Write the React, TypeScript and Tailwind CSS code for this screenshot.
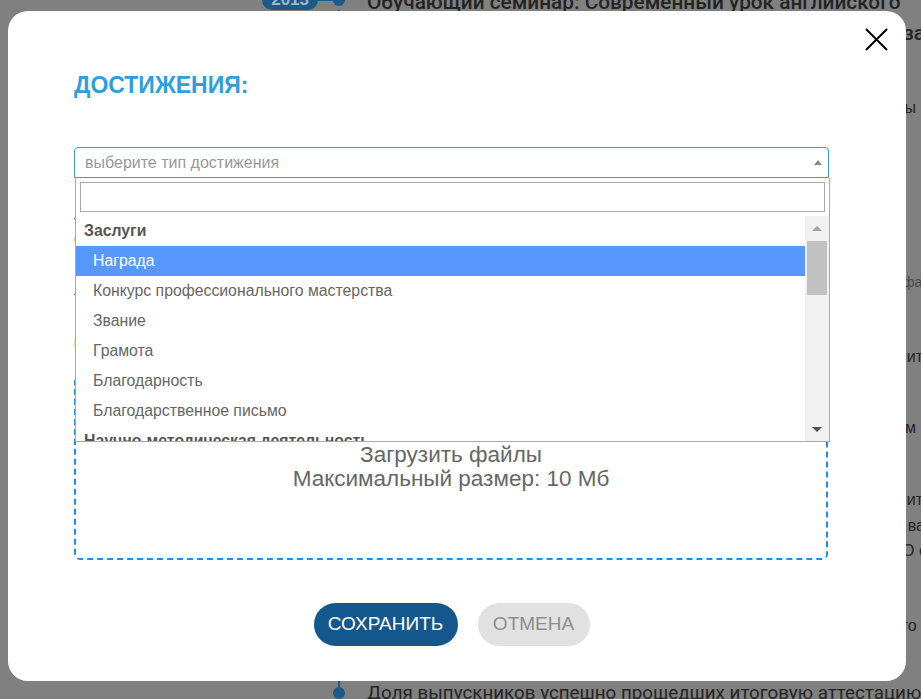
// App.tsx — achievements modal with an open select dropdown over a timeline page

const options = [
  'Награда',
  'Конкурс профессионального мастерства',
  'Звание',
  'Грамота',
  'Благодарность',
  'Благодарственное письмо',
];

function BackgroundPage() {
  return (
    <div className="flex h-[699px] w-[921px] overflow-hidden bg-[#808080] font-['Liberation_Sans',Arial,sans-serif] text-[#242424]">
      {/* timeline column */}
      <div className="flex w-[367px] shrink-0 flex-col items-end pr-[22px]">
        <div className="-mt-[10px] flex h-[20px] items-center">
          <span className="rounded-full bg-[#1c5a87] px-[9px] text-[17px] font-bold leading-[20px] text-[#9fb5c6]">2013</span>
          <span className="h-[2px] w-[15px] bg-[#1c5a87]" />
          <span className="size-[12px] rounded-full bg-[#1c5a87]" />
        </div>
        <div className="flex w-[12px] flex-1 flex-col items-center">
          <div className="w-[2px] flex-1 bg-[#1c5a87]" />
          <div className="size-[12px] shrink-0 rounded-full bg-[#1c5a87]" />
        </div>
      </div>

      {/* text column */}
      <div className="flex flex-col whitespace-nowrap">
        <div className="-mt-[10px] font-['Roboto',sans-serif] text-[20.8px] font-medium leading-[24px]">
          Обучающий семинар: Современный урок английского
        </div>
        <div className="mt-[7px] w-[558px] text-right font-['Roboto',sans-serif] text-[21px] font-medium leading-[24px]">
          языка в условиях ФГОС, организа
        </div>
        <div className="mt-[51px] w-[549px] text-right text-[16px] leading-[24px]">Результаты итоговой аттестации выпускникы</div>
        <div className="mt-[150px] w-[568px] text-right text-[14px] leading-[24px] text-[#4a4a4a]">Дата последней актуализации: факт</div>
        <div className="mt-[51px] w-[556px] text-right text-[16px] leading-[24px]">Доля обучающихся, прошедших ит</div>
        <div className="mt-[47px] w-[549px] text-right text-[16px] leading-[24px]">по образовательным программам</div>
        <div className="mt-[48px] w-[556px] text-right text-[16px] leading-[24px]">Выпускники, сдавшие экзамен ит</div>
        <div className="mt-[2px] w-[558px] text-right text-[16px] leading-[24px]">по предмету с результатом выше средне ва</div>
        <div className="mt-[1px] w-[560px] text-right text-[16px] leading-[24px]">по сравнению с данными по ОО с</div>
        <div className="mt-[51px] w-[560px] text-right text-[16px] leading-[24px]">в сравнении с прошлым учебным го г</div>
        <div className="mt-[43px] font-['Roboto',sans-serif] text-[18.8px] leading-[24px]">
          Доля выпускников успешно прошедших итоговую аттестацию (
        </div>
      </div>
    </div>
  );
}

function Scrollbar() {
  return (
    <div className="flex w-[24px] shrink-0 flex-col bg-[#f1f1f1]">
      <div className="flex h-[24px] items-center justify-center">
        <span className="h-0 w-0 border-x-[5px] border-b-[5px] border-x-transparent border-b-[#a3a3a3]" />
      </div>
      <div className="mx-[2px] mt-[1px] h-[54px] bg-[#c1c1c1]" />
      <div className="flex-1" />
      <div className="flex h-[24px] items-center justify-center">
        <span className="h-0 w-0 border-x-[5px] border-t-[5px] border-x-transparent border-t-[#505050]" />
      </div>
    </div>
  );
}

function Dropdown() {
  return (
    <div className="absolute left-[1px] top-full z-10 w-full border border-t-0 border-[#aaaaaa] bg-white">
      <div className="p-[4px]">
        <input className="block h-[30px] w-full border border-[#aaaaaa] px-[4px] outline-none" />
      </div>
      <div className="flex h-[225px]">
        <ul className="flex-1 overflow-hidden text-[15.8px] leading-[30px]">
          <li className="pl-[8px] font-bold text-[#555555]">Заслуги</li>
          {options.map((opt, i) => (
            <li
              key={opt}
              className={i === 0 ? 'bg-[#5897fb] pl-[17px] text-white' : 'pl-[17px] text-[#666666]'}
            >
              {opt}
            </li>
          ))}
          <li className="pl-[8px] font-bold text-[#555555]">Научно-методическая деятельность</li>
          <li className="pl-[17px] text-[#666666]">Публикация</li>
        </ul>
        <Scrollbar />
      </div>
    </div>
  );
}

function AchievementModal() {
  return (
    <div className="relative h-[670px] w-[898px] rounded-[20px] bg-white pl-[66px] pr-[77px] pt-[62px] font-['Liberation_Sans',Arial,sans-serif]">
      <button className="absolute right-[18px] top-[17px] cursor-pointer" aria-label="Закрыть">
        <svg width="23" height="23" viewBox="0 0 24 24" fill="none" stroke="#000" strokeWidth={2}>
          <path d="M1 1 L23 23 M23 1 L1 23" />
        </svg>
      </button>

      <h2 className="text-[23px] font-bold leading-[24px] text-[#2d9ee0]">ДОСТИЖЕНИЯ:</h2>

      <div className="relative mt-[50px]">
        <div className="flex h-[31px] items-center justify-between rounded-t-[4px] border border-[#3c9be0] pl-[10px] pr-[6px]">
          <span className="text-[16px] text-[#999999]">выберите тип достижения</span>
          <span className="h-0 w-0 border-x-[4px] border-b-[5px] border-x-transparent border-b-[#888888]" />
        </div>
        <Dropdown />
      </div>

      {/* fields hidden behind the open dropdown */}
      <div className="h-[41px] border-b border-[#3c9be0]" />
      <div className="mt-[15px] text-[12px] leading-[12px] text-[#d9534f]">Обязательно для заполнения</div>
      <div className="h-[49px] border-b border-[#3c9be0]" />
      <div className="mt-[40px] text-[14px] font-bold leading-[16px] text-[#444444]">Подтверждающие документы:</div>

      <div className="mt-[25px] flex h-[184px] w-[754px] flex-col items-center rounded-[6px] border-2 border-dashed border-[#1a8cff] pt-[65px] text-[22.5px] leading-[24px] text-[#666666]">
        <span>Загрузить файлы</span>
        <span>Максимальный размер: 10 Мб</span>
      </div>

      <div className="mt-[43px] flex justify-center gap-[20px]">
        <button className="h-[43px] w-[144px] cursor-pointer rounded-full bg-[#13578d] text-[19px] text-white">
          СОХРАНИТЬ
        </button>
        <button className="h-[43px] w-[112px] cursor-pointer rounded-full bg-[#e1e1e1] text-[19px] text-[#8d8d8d]">
          ОТМЕНА
        </button>
      </div>
    </div>
  );
}

export default function App() {
  return (
    <div className="relative h-[699px] w-[921px] overflow-hidden">
      <BackgroundPage />
      <div className="absolute inset-0 pl-[8px] pt-[11px]">
        <AchievementModal />
      </div>
    </div>
  );
}
